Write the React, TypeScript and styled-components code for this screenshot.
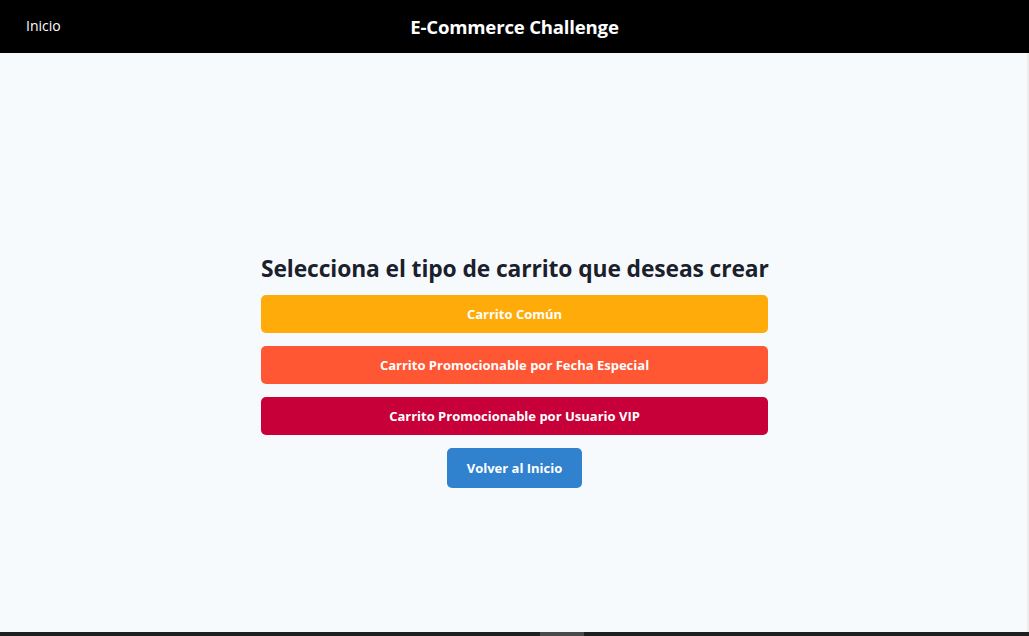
import React from "react";
import styled, { createGlobalStyle } from "styled-components";

const GlobalStyle = createGlobalStyle`
  html, body { margin: 0; padding: 0; overflow: hidden; }
  body {
    background: #f7fafc;
    font-family: "Open Sans", "Noto Sans", "Liberation Sans", sans-serif;
  }
`;

const Header = styled.header`
  height: 53px;
  background: #000;
  display: grid;
  grid-template-columns: 1fr auto 1fr;
  align-items: center;
  padding: 0 26px;
  box-sizing: border-box;
`;

const NavLink = styled.a`
  color: #fff;
  font-size: 14px;
  text-decoration: none;
  justify-self: start;
  margin-top: -2px;
`;

const Title = styled.h1`
  margin: 0;
  color: #fff;
  font-size: 18.6px;
  font-weight: 700;
  letter-spacing: -0.2px;
  margin-top: -1px;
`;

const Main = styled.main`
  height: 100vh;
  display: flex;
  align-items: center;
  justify-content: center;
`;

const Panel = styled.div`
  display: flex;
  flex-direction: column;
  align-items: stretch;
  width: 507px;
  gap: 13px;
`;

const Heading = styled.h2`
  margin: 0 0 -2px;
  color: #1a202c;
  font-size: 22.8px;
  font-weight: 700;
  letter-spacing: -0.1px;
  text-align: center;
  white-space: nowrap;
  line-height: 30px;
`;

const CartButton = styled.button<{ $bg: string }>`
  height: 38px;
  border: none;
  border-radius: 5px;
  background: ${(p) => p.$bg};
  color: #fff;
  font-family: inherit;
  font-size: 13px;
  font-weight: 700;
  cursor: pointer;
`;

const BackButton = styled.button`
  align-self: center;
  height: 40px;
  width: 135px;
  border: none;
  border-radius: 5px;
  background: #3182ce;
  color: #fff;
  font-family: inherit;
  font-size: 13px;
  font-weight: 700;
  cursor: pointer;
`;

const ScrollTrack = styled.div`
  position: fixed;
  left: 0;
  right: 0;
  bottom: 0;
  height: 4px;
  background: #1f1f1f;
`;

const ScrollThumb = styled.div`
  position: absolute;
  left: 540px;
  top: 0;
  width: 44px;
  height: 4px;
  background: #4a4a4a;
`;

const SideEdge = styled.div`
  position: fixed;
  top: 53px;
  right: 0;
  bottom: 4px;
  width: 2px;
  background: #ececec;
`;

const carts = [
  { label: "Carrito Común", bg: "#ffab0a" },
  { label: "Carrito Promocionable por Fecha Especial", bg: "#ff5733" },
  { label: "Carrito Promocionable por Usuario VIP", bg: "#c70039" },
];

export default function App() {
  return (
    <>
      <GlobalStyle />
      <Header>
        <NavLink href="#">Inicio</NavLink>
        <Title>E-Commerce Challenge</Title>
        <span />
      </Header>
      <Main>
        <Panel>
          <Heading>Selecciona el tipo de carrito que deseas crear</Heading>
          {carts.map((c) => (
            <CartButton key={c.label} $bg={c.bg}>
              {c.label}
            </CartButton>
          ))}
          <BackButton>Volver al Inicio</BackButton>
        </Panel>
      </Main>
      <SideEdge />
      <ScrollTrack>
        <ScrollThumb />
      </ScrollTrack>
    </>
  );
}
